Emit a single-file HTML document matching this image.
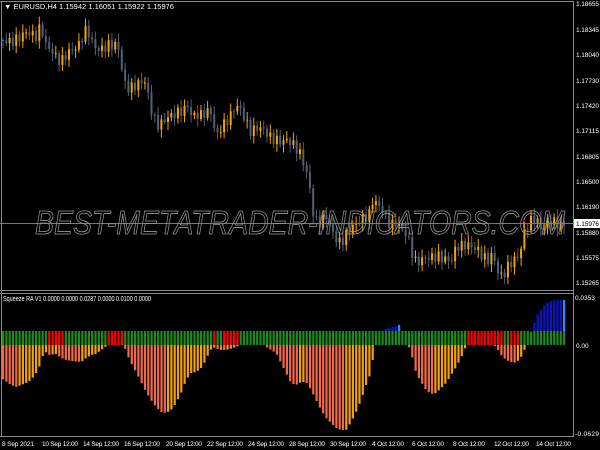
<!DOCTYPE html>
<html><head><meta charset="utf-8"><style>
html,body{margin:0;padding:0;background:#000;width:600px;height:450px;overflow:hidden}
svg{display:block}
text{font-family:"Liberation Sans",sans-serif}
</style></head><body>
<svg id="s" width="600" height="450" viewBox="0 0 600 450" xmlns="http://www.w3.org/2000/svg">
<rect width="600" height="450" fill="#000"/>
<g id="cc"></g>
<line x1="0" y1="223.5" x2="573" y2="223.5" stroke="#777" stroke-width="1"/>
<text x="300" y="234" text-anchor="middle" font-size="33" font-style="italic" fill="none" stroke="#999" stroke-width="0.8" textLength="530" lengthAdjust="spacingAndGlyphs">BEST-METATRADER-INDICATORS.COM</text>
<g stroke="#8a8a8a" fill="none" stroke-width="1">
<line x1="0" y1="1.5" x2="574" y2="1.5"/>
<line x1="1.5" y1="1" x2="1.5" y2="437"/>
<line x1="573.5" y1="1" x2="573.5" y2="437"/>
<line x1="0" y1="290.5" x2="574" y2="290.5"/>
<line x1="0" y1="293.5" x2="574" y2="293.5"/>
<line x1="0" y1="436.5" x2="574" y2="436.5"/>
</g>
<text x="4" y="9" font-size="7" fill="#fff" textLength="170" lengthAdjust="spacingAndGlyphs">▼ EURUSD,H4  1.15942 1.16051 1.15922 1.15976</text>
<text x="3" y="301" font-size="7" fill="#fff" textLength="148" lengthAdjust="spacingAndGlyphs">Squeeze RA V1 0.0000 0.0000 0.0287 0.0000 0.0100 0.0000</text>
<g font-size="6.5" fill="#fff">
<text x="576" y="6" textLength="23">1.18655</text><text x="576" y="32" textLength="23">1.18345</text><text x="576" y="57" textLength="23">1.18040</text><text x="576" y="83" textLength="23">1.17730</text><text x="576" y="108" textLength="23">1.17420</text><text x="576" y="133" textLength="23">1.17115</text><text x="576" y="159" textLength="23">1.16805</text><text x="576" y="184" textLength="23">1.16500</text><text x="576" y="209" textLength="23">1.16190</text><text x="576" y="235" textLength="23">1.15880</text><text x="576" y="260" textLength="23">1.15575</text><text x="576" y="285" textLength="23">1.15265</text>
<text x="575" y="300">0.0353</text><text x="576" y="348">0.00</text><text x="575" y="436" textLength="24">-0.0629</text>
</g>
<rect x="574" y="219" width="26" height="9" fill="#fff"/>
<text x="576" y="226" font-size="6.5" fill="#000" textLength="23">1.15976</text>
<g font-size="6.5" fill="#fff">
<text x="2" y="446" textLength="32">8 Sep 2021</text><text x="42" y="446" textLength="36">10 Sep 12:00</text><text x="83" y="446" textLength="36">14 Sep 12:00</text><text x="124" y="446" textLength="36">16 Sep 12:00</text><text x="166" y="446" textLength="36">20 Sep 12:00</text><text x="207" y="446" textLength="36">22 Sep 12:00</text><text x="248" y="446" textLength="36">24 Sep 12:00</text><text x="289" y="446" textLength="36">28 Sep 12:00</text><text x="330" y="446" textLength="36">30 Sep 12:00</text><text x="372" y="446" textLength="32">4 Oct 12:00</text><text x="412" y="446" textLength="32">6 Oct 12:00</text><text x="453" y="446" textLength="32">8 Oct 12:00</text><text x="494" y="446" textLength="35">12 Oct 12:00</text><text x="536" y="446" textLength="35">14 Oct 12:00</text>
</g>
<g id="hh"></g>
</svg>
<script>
(function(){
var NS="http://www.w3.org/2000/svg";
function R(g,x,y,w,h,f){var r=document.createElementNS(NS,"rect");r.setAttribute("x",x);r.setAttribute("y",y);r.setAttribute("width",w);r.setAttribute("height",Math.max(h,1));r.setAttribute("fill",f);g.appendChild(r);}
function interp(k,x){for(var i=1;i<k.length;i++){if(x<=k[i][0]){var a=k[i-1],b=k[i];return a[1]+(b[1]-a[1])*(x-a[0])/(b[0]-a[0]);}}return k[k.length-1][1];}
var P=[[0,40],[10,42],[18,38],[25,32],[35,36],[40,26],[45,45],[50,50],[55,57],[60,62],[65,55],[70,50],[75,48],[80,42],[83,30],[88,33],[92,45],[98,50],[103,48],[108,45],[113,45],[117,45],[120,65],[125,88],[130,88],[135,85],[140,82],[145,82],[148,100],[152,117],[157,125],[162,122],[167,117],[172,115],[178,112],[183,110],[187,105],[190,115],[195,115],[200,115],[205,112],[210,112],[215,137],[220,128],[225,122],[230,115],[235,105],[240,110],[245,122],[250,132],[255,128],[260,128],[265,132],[270,138],[275,140],[280,142],[285,140],[290,142],[295,148],[300,155],[305,170],[310,195],[313,220],[320,223],[325,215],[330,228],[337,243],[342,240],[345,235],[350,228],[357,222],[362,218],[368,215],[372,200],[377,205],[382,210],[387,222],[390,225],[395,222],[400,228],[407,237],[410,250],[415,263],[420,260],[425,258],[428,258],[432,257],[437,256],[440,258],[445,259],[450,262],[453,252],[457,246],[460,246],[463,245],[468,245],[473,248],[477,250],[482,257],[487,260],[492,254],[497,272],[500,276],[503,274],[508,265],[513,260],[519,255],[522,235],[527,225],[532,218],[537,222],[540,228],[543,228],[550,220],[553,222],[558,225],[562,225],[565,224]];
var N=[[0,378],[10,385],[15,387],[20,385],[25,383],[30,380],[35,373],[40,363],[43,350],[47,355],[55,354],[60,358],[65,360],[70,361],[80,362],[85,358],[90,355],[95,354],[100,350],[104,347],[107,345],[123,345],[125,352],[130,363],[135,372],[140,382],[145,392],[150,400],[155,407],[160,412],[165,413],[170,410],[175,403],[180,393],[185,380],[190,373],[195,372],[200,368],[205,360],[208,352],[212,347],[218,350],[225,350],[232,348],[237,346],[240,345],[262,345],[265,347],[270,350],[275,353],[280,363],[285,373],[290,383],[295,385],[300,382],[305,382],[310,390],[315,400],[320,410],[325,418],[330,423],[335,428],[340,430],[345,430],[350,422],[355,412],[360,400],[365,385],[370,372],[372,357],[375,345],[407,345],[409,350],[412,360],[415,373],[420,382],[425,390],[430,394],[435,393],[440,388],[445,383],[450,375],[455,367],[460,358],[463,350],[466,345],[492,345],[495,347],[500,355],[505,360],[510,362],[515,363],[520,357],[523,351],[525,345],[600,345]];
var B=[[380,331],[384,329],[390,327],[395,326],[398,325],[530,331],[532,327],[535,317],[538,312],[542,307],[545,303],[548,302],[552,300],[565,300]];
var cg=document.getElementById("cc"),hg=document.getElementById("hh");
var prevC=40;
for(var i=0;i<171;i++){
 var x=2+i*3.3;
 var cl=interp(P,x)+Math.sin(i*2.7)*5;
 var tp=Math.min(prevC,cl),bt=Math.max(prevC,cl);
 var col=(cl<prevC)?"#f5a20a":"#506276";
 var wt=tp-2-Math.abs(Math.sin(i*1.3))*6, wb=bt+2+Math.abs(Math.cos(i*1.7))*6;
 R(cg,x+0.5,wt,1,wb-wt,col);
 R(cg,x,tp,2,bt-tp,col);
 prevC=cl;
 var red=(x>=45&&x<=62)||(x>=107&&x<=123)||(x>=210&&x<=215)||(x>=220&&x<=237)||(x>=467&&x<=503)||(x>=510&&x<=520);
 R(hg,x,331,2.2,14,red?"#ff0000":"#1f8a1f");
 var d=interp(N,x),dp=interp(N,x-3.3);
 if(d>345.6){R(hg,x,345,2.2,d-345,d>=dp?"#f26a4e":"#f0a010");}
 if((x>=380&&x<=399)||(x>=530&&x<=566)){var t=interp(B,x);R(hg,x,t,2.2,331-t,((x>=397&&x<=400)||x>=561)?"#2a8cff":"#0a14c8");}
}
})();
</script>
</body></html>
